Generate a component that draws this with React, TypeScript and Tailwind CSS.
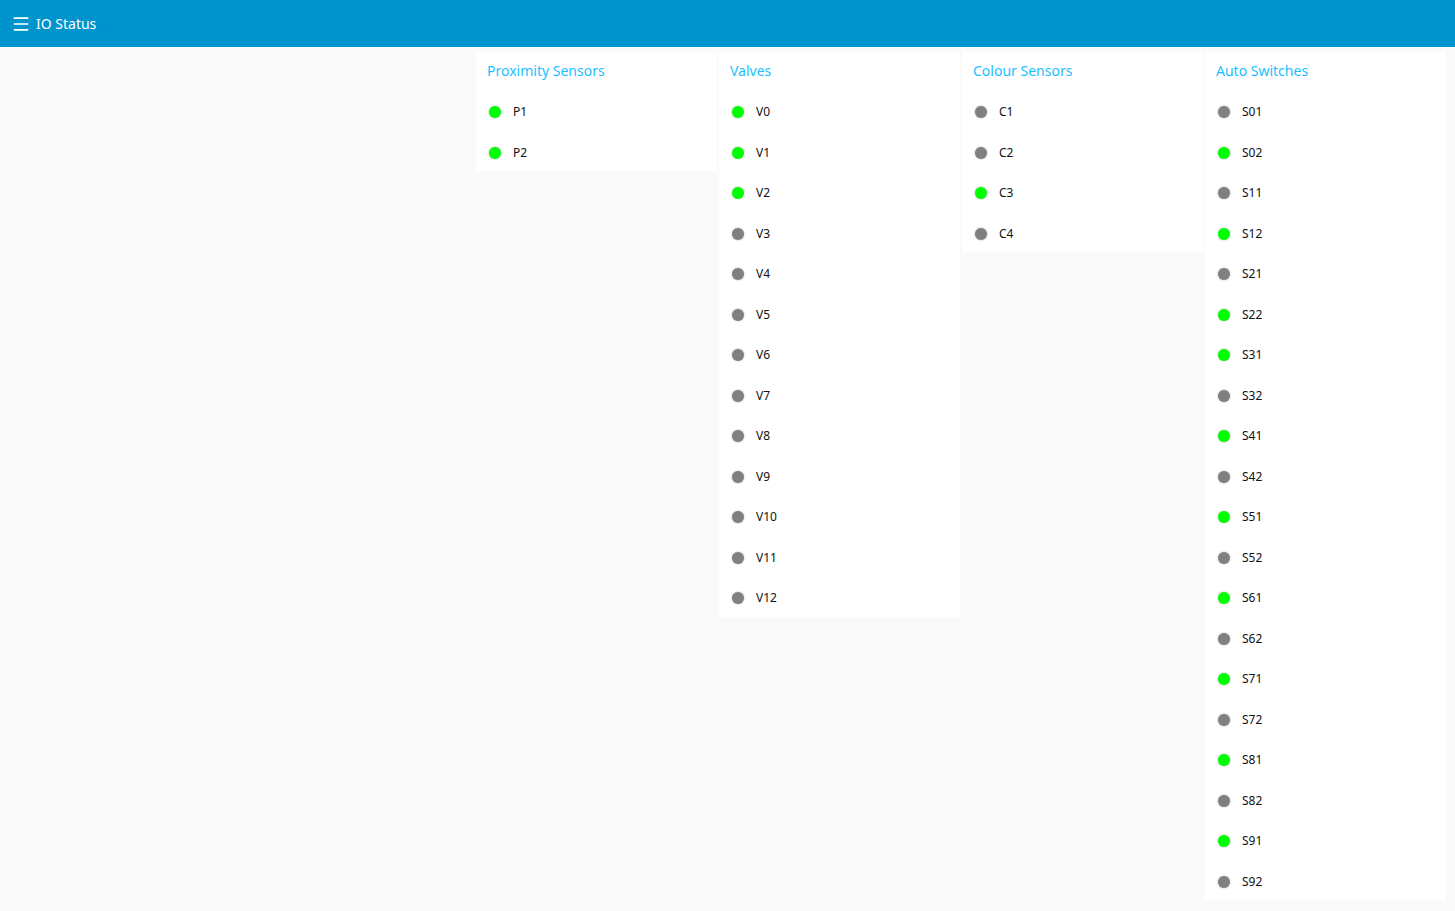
import { Menu } from 'lucide-react';

type Led = { name: string; on: boolean };

// states as read off the panel
const valvesOn = ['V0', 'V1', 'V2'];
const coloursOn = ['C3'];
const autoOn = ['S02', 'S12', 'S22', 'S31', 'S41', 'S51', 'S61', 'S71', 'S81', 'S91'];

const toLeds = (names: string[], on: string[]): Led[] => names.map((name) => ({ name, on: on.includes(name) }));

const groups: { title: string; items: Led[] }[] = [
  { title: 'Proximity Sensors', items: toLeds(['P1', 'P2'], ['P1', 'P2']) },
  {
    title: 'Valves',
    items: toLeds(['V0', 'V1', 'V2', 'V3', 'V4', 'V5', 'V6', 'V7', 'V8', 'V9', 'V10', 'V11', 'V12'], valvesOn),
  },
  { title: 'Colour Sensors', items: toLeds(['C1', 'C2', 'C3', 'C4'], coloursOn) },
  {
    title: 'Auto Switches',
    items: toLeds(
      ['S01', 'S02', 'S11', 'S12', 'S21', 'S22', 'S31', 'S32', 'S41', 'S42', 'S51', 'S52', 'S61', 'S62', 'S71', 'S72', 'S81', 'S82', 'S91', 'S92'],
      autoOn
    ),
  },
];

function Group({ title, items }: { title: string; items: Led[] }) {
  return (
    <div className="w-[241px] bg-white">
      <div className="h-[38px] flex items-center px-[11px] pb-[2px] text-[14px] text-[#1bbfff]">{title}</div>
      {items.map((it) => (
        <div key={it.name} className="h-[40.5px] flex items-center pt-[4px] pl-[13px]">
          <span
            className={
              it.on
                ? 'w-[12px] h-[12px] rounded-full bg-[#00ff00] shadow-[0_0_2px_rgba(0,0,0,0.35)]'
                : 'w-[12px] h-[12px] rounded-full bg-[#808080] shadow-[0_0_2px_rgba(0,0,0,0.35)]'
            }
          />
          <span className="ml-[12px] text-[12px] text-[#111111]">{it.name}</span>
        </div>
      ))}
    </div>
  );
}

export default function App() {
  return (
    <div className="min-h-[911px] bg-[#fafafa] font-['Noto_Sans','Open_Sans',sans-serif]">
      <header className="h-[47px] bg-[#0094ce] flex items-center pl-[11px] gap-[5px] text-white">
        <Menu className="w-[20px] h-[20px]" strokeWidth={2} />
        <span className="text-[14px]">IO Status</span>
      </header>
      <main className="flex justify-end items-start gap-[2px] pt-[5px] pr-[9px]">
        {groups.map((g) => (
          <Group key={g.title} title={g.title} items={g.items} />
        ))}
      </main>
    </div>
  );
}
